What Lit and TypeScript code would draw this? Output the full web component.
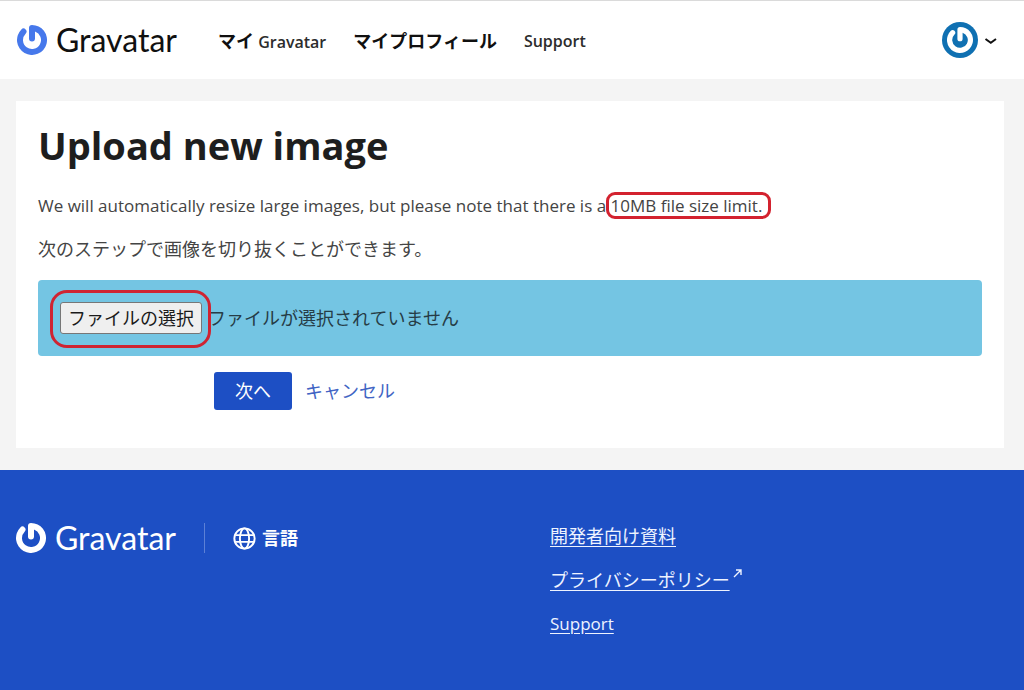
import { LitElement, html, css, svg } from "lit";
import { customElement, property, state } from "lit/decorators.js";

const MARK =
  "M10.8 2.699v9.45a2.699 2.699 0 005.398 0V5.862a8.101 8.101 0 11-8.423 1.913 2.702 2.702 0 00-3.821-3.821A13.5 13.5 0 1013.499 0 2.699 2.699 0 0010.8 2.699z";

@customElement("gravatar-logo")
class GravatarLogo extends LitElement {
  static styles = css`
    :host {
      display: inline-flex;
      align-items: center;
      gap: 9px;
      font-family: Lato, "Liberation Sans", sans-serif;
      font-size: 32px;
      line-height: 40px;
    }
    .mark {
      width: 30px;
      height: 30px;
      fill: var(--mark-color, currentColor);
    }
  `;

  render() {
    return html`<svg class="mark" viewBox="0 0 27 27" aria-hidden="true">${svg`<path d=${MARK} />`}</svg
      ><span>Gravatar</span>`;
  }
}

@customElement("site-header")
class SiteHeader extends LitElement {
  static styles = css`
    :host {
      display: block;
      background: #fff;
      border-top: 1px solid #dadada;
    }
    .bar {
      display: flex;
      align-items: center;
      gap: 41px;
      height: 78px;
      padding: 0 24px 0 17px;
    }
    .home {
      display: flex;
      color: #101010;
      text-decoration: none;
      --mark-color: #4678eb;
    }
    .nav {
      display: flex;
      align-items: center;
      gap: 27px;
      flex: 1;
      padding-top: 2px;
    }
    .link {
      font-size: 16px;
      line-height: 24px;
      font-weight: 600;
      color: #2c2c2c;
      text-decoration: none;
    }
    .ja {
      font-size: 18px;
      color: #101010;
    }
    .account {
      display: flex;
      align-items: center;
      gap: 4px;
      padding: 0;
      border: 0;
      background: none;
      cursor: pointer;
    }
    .avatar {
      width: 36px;
      height: 36px;
    }
    .chevron {
      width: 18px;
      height: 18px;
    }
  `;

  render() {
    return html`
      <header class="bar">
        <a class="home" href="#"><gravatar-logo></gravatar-logo></a>
        <nav class="nav">
          <a class="link" href="#"><span class="ja">マイ</span> Gravatar</a>
          <a class="link ja" href="#">マイプロフィール</a>
          <a class="link" href="#">Support</a>
        </nav>
        <button class="account" type="button" aria-label="Account">
          <svg class="avatar" viewBox="0 0 36 36" aria-hidden="true">
            <circle cx="18" cy="18" r="18" fill="#0f70b2" />
            <path transform="translate(5 5) scale(.963)" fill="#fff" d=${MARK} />
          </svg>
          <svg class="chevron" viewBox="0 0 18 18" aria-hidden="true">
            <path d="M3.5 8l5.3 3.8L14 8" fill="none" stroke="#111" stroke-width="2" />
          </svg>
        </button>
      </header>
    `;
  }
}

@customElement("file-picker")
class FilePicker extends LitElement {
  @state() private fileName = "";

  static styles = css`
    :host {
      display: flex;
      align-items: center;
      gap: 6px;
      padding: 22px;
      border-radius: 4px;
      background: #74c5e3;
      font-size: 18px;
      line-height: 24px;
      color: #263c46;
    }
    .highlight {
      position: relative;
      display: flex;
    }
    .highlight::after {
      content: "";
      position: absolute;
      inset: -12px -9px -14px -10px;
      border: 3px solid #cf2432;
      border-radius: 17px;
      pointer-events: none;
    }
    .choose {
      padding: 3px 7px;
      border: 1px solid #777;
      border-radius: 3px;
      background: #efefef;
      color: #1a1a1a;
      font: inherit;
      white-space: nowrap;
    }
    .native {
      display: none;
    }
  `;

  private open() {
    this.renderRoot.querySelector<HTMLInputElement>(".native")?.click();
  }

  private picked(event: Event) {
    this.fileName = (event.target as HTMLInputElement).files?.[0]?.name ?? "";
  }

  render() {
    return html`
      <span class="highlight">
        <button class="choose" type="button" @click=${this.open}>ファイルの選択</button>
      </span>
      <input class="native" id="file" type="file" accept="image/*" @change=${this.picked} />
      <label for="file">${this.fileName || "ファイルが選択されていません"}</label>
    `;
  }
}

@customElement("upload-card")
class UploadCard extends LitElement {
  static styles = css`
    :host {
      display: block;
      padding: 22px;
      background: #fff;
      color: #444;
    }
    .title {
      margin: 0 0 27px;
      font-size: 38px;
      line-height: 44px;
      font-weight: 700;
      color: #1e1e1e;
    }
    .text {
      margin: 0 0 19px;
      font-size: 17px;
      line-height: 24px;
    }
    .limit {
      position: relative;
    }
    .limit::after {
      content: "";
      position: absolute;
      inset: -2px -9px -2px -5px;
      border: 3px solid #d3222f;
      border-radius: 9px;
      pointer-events: none;
    }
    .ja {
      font-size: 18px;
    }
    .actions {
      display: flex;
      align-items: center;
      gap: 13px;
      padding: 16px 0 16px 176px;
      font-size: 18px;
      line-height: 24px;
    }
    .next {
      padding: 7px 21px;
      border: 0;
      border-radius: 3px;
      background: #1d4fc4;
      color: #fff;
      font: inherit;
    }
    .cancel {
      color: #4164c4;
      text-decoration: none;
    }
  `;

  render() {
    return html`
      <h1 class="title">Upload new image</h1>
      <p class="text">
        We will automatically resize large images, but please note that there is a
        <span class="limit">10MB file size limit.</span>
      </p>
      <p class="text ja">次のステップで画像を切り抜くことができます。</p>
      <file-picker></file-picker>
      <div class="actions">
        <button class="next" type="button">次へ</button>
        <a class="cancel" href="#">キャンセル</a>
      </div>
    `;
  }
}

@customElement("footer-link")
class FooterLink extends LitElement {
  @property() label = "";
  @property({ type: Boolean }) external = false;

  static styles = css`
    :host {
      display: flex;
    }
    .link {
      color: #eef3ff;
      text-decoration: underline;
      text-underline-offset: 3px;
    }
    .arrow {
      width: 10px;
      height: 10px;
      margin-left: 3px;
      color: #eef3ff;
    }
  `;

  render() {
    return html`<a class="link" href="#">${this.label}</a>${this.external
        ? html`<svg class="arrow" viewBox="0 0 10 10" aria-hidden="true">
            <path d="M1 9l7-7M3 2h5v5" fill="none" stroke="currentColor" stroke-width="1.4" />
          </svg>`
        : null}`;
  }
}

@customElement("site-footer")
class SiteFooter extends LitElement {
  static styles = css`
    :host {
      display: block;
      background: #1d4fc4;
      color: #fff;
    }
    .columns {
      display: grid;
      grid-template-columns: 534px 1fr;
      padding: 48px 16px;
    }
    .brand {
      display: flex;
      align-items: center;
      align-self: start;
    }
    .language {
      display: flex;
      align-items: center;
      gap: 6px;
      margin-left: 28px;
      padding: 3px 0 3px 28px;
      border: 0;
      border-left: 1px solid #5c80d6;
      background: none;
      color: inherit;
      font: inherit;
      font-weight: 700;
      font-size: 18px;
      line-height: 24px;
    }
    .globe {
      width: 23px;
      height: 23px;
      fill: none;
      stroke: currentColor;
      stroke-width: 2;
    }
    .links {
      display: grid;
      gap: 20px;
      padding-top: 6px;
      font-size: 18px;
      line-height: 24px;
    }
    .latin {
      font-size: 17px;
    }
  `;

  render() {
    return html`
      <footer class="columns">
        <div class="brand">
          <gravatar-logo></gravatar-logo>
          <button class="language" type="button">
            <svg class="globe" viewBox="0 0 24 24" aria-hidden="true">
              <circle cx="12" cy="12" r="10.6" />
              <ellipse cx="12" cy="12" rx="4.8" ry="10.6" />
              <path d="M2.4 8.5h19.2M2.4 15.5h19.2" />
            </svg>
            言語
          </button>
        </div>
        <nav class="links">
          <footer-link label="開発者向け資料"></footer-link>
          <footer-link label="プライバシーポリシー" external></footer-link>
          <footer-link class="latin" label="Support"></footer-link>
        </nav>
      </footer>
    `;
  }
}

@customElement("app-root")
class AppRoot extends LitElement {
  static styles = css`
    :host {
      display: flex;
      flex-direction: column;
      min-height: 100vh;
      background: #f4f4f4;
      font-family: "Open Sans", "Noto Sans CJK JP", sans-serif;
    }
    .main {
      padding: 22px 20px 22px 16px;
    }
    .footer {
      flex: 1;
    }
  `;

  render() {
    return html`
      <site-header></site-header>
      <main class="main"><upload-card></upload-card></main>
      <site-footer class="footer"></site-footer>
    `;
  }
}
